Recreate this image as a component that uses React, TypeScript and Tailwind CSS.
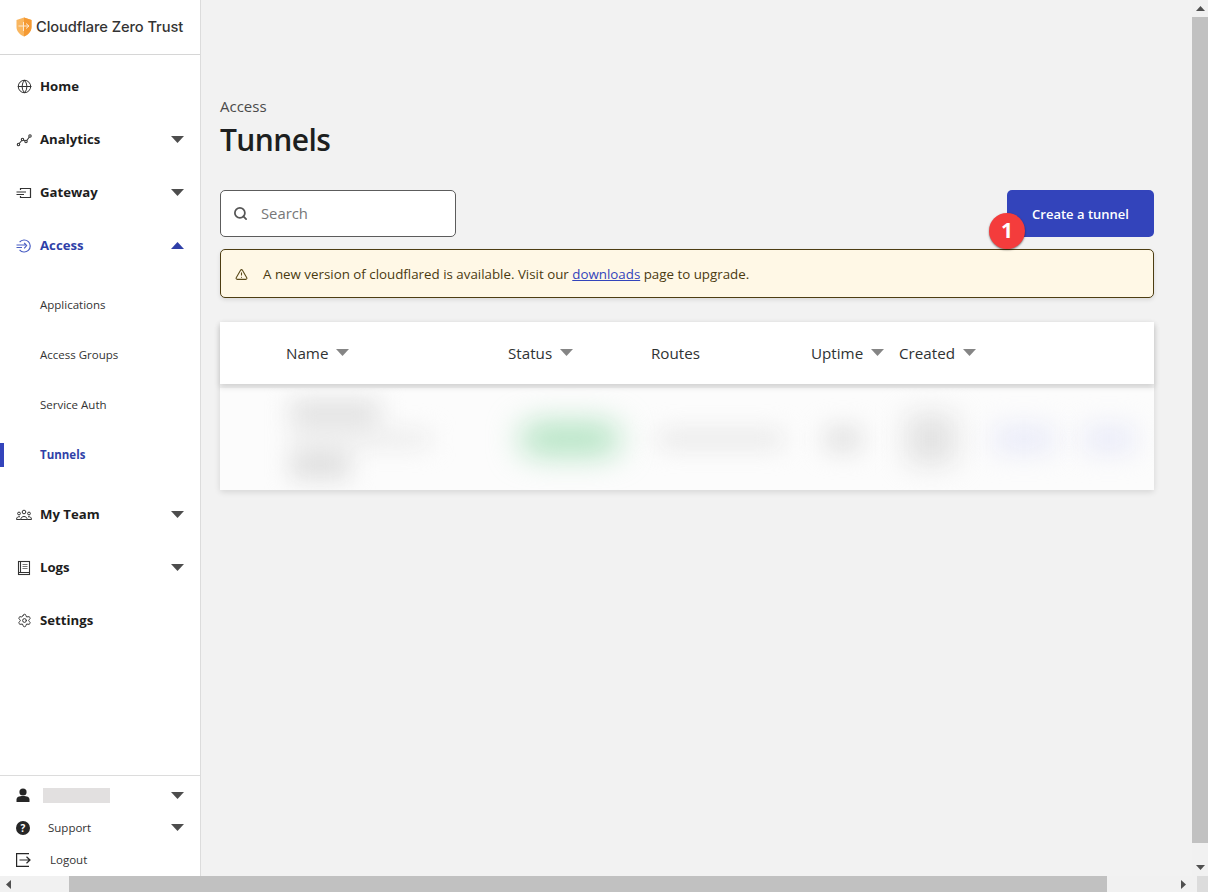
import React from 'react';
import { Globe, Search, Settings, TriangleAlert } from 'lucide-react';

const font = "font-['Open_Sans','Noto_Sans',sans-serif]";

function Caret({ up = false, blue = false }: { up?: boolean; blue?: boolean }) {
  return (
    <svg width="13" height="7" viewBox="0 0 13 7" className="shrink-0">
      <path d={up ? 'M0 7 L6.5 0 L13 7 Z' : 'M0 0 L13 0 L6.5 7 Z'} fill={blue ? '#2f3fa8' : '#4d4d4d'} />
    </svg>
  );
}

function SortCaret() {
  return (
    <svg width="13" height="7" viewBox="0 0 13 7" className="shrink-0">
      <path d="M0 0 L13 0 L6.5 7 Z" fill="#858585" />
    </svg>
  );
}

function Logo() {
  return (
    <svg width="16" height="20" viewBox="0 0 16 20" className="shrink-0">
      <path d="M8 0.5 L15.5 3 V10 C15.5 14.5 12 17.8 8 19.5 C4 17.8 0.5 14.5 0.5 10 V3 Z" fill="#f9b65f" />
      <path d="M8 0.5 L15.5 3 V10 C15.5 14.5 12 17.8 8 19.5 Z" fill="#f59a33" />
      <path d="M2.5 9 H13 M10 6.5 L13 9 L10 11.5 M7.5 5 V14" stroke="#fde9d0" strokeWidth="1" fill="none" />
    </svg>
  );
}

function AnalyticsIcon() {
  return (
    <svg width="16" height="16" viewBox="0 0 16 16" fill="none" stroke="#333" strokeWidth="1.1">
      <circle cx="2.5" cy="12.5" r="1.2" />
      <circle cx="6.5" cy="7.5" r="1.2" />
      <circle cx="10" cy="9.5" r="1.2" />
      <circle cx="14" cy="4" r="1.2" />
      <path d="M3.2 11.5 L5.8 8.5 M7.6 8.1 L8.9 8.9 M10.8 8.5 L13.3 5" />
    </svg>
  );
}

function GatewayIcon() {
  return (
    <svg width="16" height="16" viewBox="0 0 16 16" fill="none" stroke="#333" strokeWidth="1.2">
      <path d="M4.5 5 V3.5 H14.5 V12.5 H4.5 V11" />
      <path d="M0.5 7 H10 M0.5 9.5 H8" />
    </svg>
  );
}

function AccessIcon() {
  return (
    <svg width="16" height="16" viewBox="0 0 16 16" fill="none" stroke="#4a5fc4" strokeWidth="1.2">
      <path d="M3.6 4.2 A6 6 0 1 1 3.6 11.8" />
      <path d="M0.5 7 H10 M0.5 9.5 H6 M8.2 4.8 L10.6 7.6 L8.2 10.4" />
    </svg>
  );
}

function TeamIcon() {
  return (
    <svg width="16" height="12" viewBox="0 0 16 12" fill="none" stroke="#333" strokeWidth="1">
      <circle cx="8" cy="3" r="1.8" />
      <circle cx="3" cy="4.5" r="1.4" />
      <circle cx="13" cy="4.5" r="1.4" />
      <path d="M4.8 10.5 C4.8 6.5 11.2 6.5 11.2 10.5 Z" />
      <path d="M0.5 10.5 C0.5 7.8 2.6 7.4 4 7.8 M15.5 10.5 C15.5 7.8 13.4 7.4 12 7.8 M0.5 10.5 H4.8 M11.2 10.5 H15.5" />
    </svg>
  );
}

function LogsIcon() {
  return (
    <svg width="16" height="16" viewBox="0 0 16 16" fill="none" stroke="#333" strokeWidth="1.1">
      <rect x="2.5" y="1.5" width="11" height="13" />
      <path d="M2.5 12.5 H13.5 M4.5 1.5 V12.5" />
      <path d="M6.5 4.5 H11.5 M6.5 6.5 H11.5 M6.5 8.5 H11.5" stroke="#777" />
    </svg>
  );
}

function UserIcon() {
  return (
    <svg width="14" height="14" viewBox="0 0 14 14" fill="#262626">
      <circle cx="7" cy="4" r="3.6" />
      <path d="M0.5 14 V11.5 C0.5 9 3 8 7 8 C11 8 13.5 9 13.5 11.5 V14 Z" />
    </svg>
  );
}

function LogoutIcon() {
  return (
    <svg width="15" height="14" viewBox="0 0 15 14" fill="none" stroke="#262626" strokeWidth="1.2">
      <path d="M13 0.6 H0.6 V13.4 H13" />
      <path d="M3.5 7 H14 M10.5 3.8 L14 7 L10.5 10.2" />
    </svg>
  );
}

function NavItem({
  icon,
  label,
  caret,
  active,
}: {
  icon: React.ReactNode;
  label: string;
  caret?: 'up' | 'down';
  active?: boolean;
}) {
  return (
    <div className="flex h-[53px] items-center pl-4 pr-4">
      <span className="flex w-6 shrink-0 items-center justify-start">{icon}</span>
      <span className={`flex-1 text-[13.2px] font-bold ${active ? 'text-[#2f3fa8]' : 'text-[#1d1d1d]'}`}>{label}</span>
      {caret && <Caret up={caret === 'up'} blue={active} />}
    </div>
  );
}

function SubItem({ label, active }: { label: string; active?: boolean }) {
  return (
    <div className="flex h-[50px] items-center">
      <span className={`h-6 w-[4px] ${active ? 'bg-[#3344bb]' : ''}`} />
      <span className={`pl-9 text-[11.5px] ${active ? 'font-bold text-[#2f3fa8]' : 'text-[#333]'}`}>{label}</span>
    </div>
  );
}

function Sidebar() {
  return (
    <aside className="flex w-[201px] shrink-0 flex-col border-r border-[#dcdcdc] bg-white">
      <div className="flex h-[55px] shrink-0 items-center gap-1 border-b border-[#d6d6d6] pl-4">
        <Logo />
        <span className="font-['Inter',sans-serif] text-[14.7px] font-medium tracking-[-0.1px] text-[#333]">Cloudflare Zero Trust</span>
      </div>
      <nav className="flex flex-1 flex-col pt-[5px]">
        <NavItem icon={<Globe size={15} color="#333" strokeWidth={1.6} className="ml-[1px]" />} label="Home" />
        <NavItem icon={<AnalyticsIcon />} label="Analytics" caret="down" />
        <NavItem icon={<GatewayIcon />} label="Gateway" caret="down" />
        <NavItem icon={<AccessIcon />} label="Access" caret="up" active />
        <div className="flex flex-col pb-[8px] pt-[8px]">
          <SubItem label="Applications" />
          <SubItem label="Access Groups" />
          <SubItem label="Service Auth" />
          <SubItem label="Tunnels" active />
        </div>
        <NavItem icon={<TeamIcon />} label="My Team" caret="down" />
        <NavItem icon={<LogsIcon />} label="Logs" caret="down" />
        <NavItem icon={<Settings size={15} color="#333" strokeWidth={1.6} className="ml-[1px]" />} label="Settings" />
      </nav>
      <div className="flex h-[101px] shrink-0 flex-col border-t border-[#dcdcdc] pl-4 pr-4 pt-[3px]">
        <div className="flex h-[32px] items-center">
          <span className="w-[27px]"><UserIcon /></span>
          <span className="h-[15px] w-[67px] flex-none bg-[#e2e0e0]" />
          <span className="flex-1" />
          <Caret />
        </div>
        <div className="flex h-[33px] items-center">
          <span className="flex w-[32px] items-center">
            <span className="flex h-[14px] w-[14px] items-center justify-center rounded-full bg-[#262626] text-[10px] font-bold leading-none text-white">?</span>
          </span>
          <span className="flex-1 text-[11.5px] text-[#333]">Support</span>
          <Caret />
        </div>
        <div className="flex h-[31px] items-center">
          <span className="w-[34px]"><LogoutIcon /></span>
          <span className="text-[11.5px] text-[#333]">Logout</span>
        </div>
      </div>
    </aside>
  );
}

function Th({ label, sort, className }: { label: string; sort?: boolean; className: string }) {
  return (
    <div className={`flex items-center gap-[8px] text-[15.2px] font-medium text-[#2f3233] ${className}`}>
      <span>{label}</span>
      {sort && <SortCaret />}
    </div>
  );
}

function BlurredRow() {
  return (
    <div className="mt-[4px] flex h-[102px] items-center overflow-hidden bg-[#fcfcfc]">
      <div className="ml-[70px] flex w-[150px] flex-col gap-[8px] blur-[12px]">
        <span className="h-[24px] w-[90px] bg-[#e0e0e0]" />
        <span className="h-[14px] w-[140px] bg-[#e8e8e8]" />
        <span className="h-[24px] w-[60px] bg-[#dcdcdc]" />
      </div>
      <span className="ml-[80px] h-[30px] w-[100px] rounded-full bg-[#a8e0ba] blur-[16px]" />
      <span className="ml-[38px] h-[16px] w-[125px] bg-[#e6e6e6] blur-[12px]" />
      <span className="ml-[42px] h-[24px] w-[36px] bg-[#e0e0e0] blur-[12px]" />
      <span className="ml-[45px] h-[50px] w-[50px] bg-[#e2e2e2] blur-[14px]" />
      <span className="ml-[38px] h-[24px] w-[60px] bg-[#e6e8f8] blur-[14px]" />
      <span className="ml-[30px] h-[24px] w-[50px] bg-[#e6e8f8] blur-[14px]" />
    </div>
  );
}

export default function App() {
  return (
    <div className={`flex h-[892px] w-[1208px] flex-col overflow-hidden bg-[#f2f2f2] ${font}`}>
      <div className="flex h-[876px]">
        <Sidebar />
        <main className="flex min-w-0 flex-1 flex-col pl-[19px] pr-[38px] pt-[97px]">
          <div className="text-[15px] leading-[18px] text-[#4a4a4a]">Access</div>
          <h1 className="mt-[5px] text-[30px] font-semibold leading-[40px] tracking-[-0.6px] text-[#1d1f20]">Tunnels</h1>
          <div className="mt-[30px] flex items-center justify-between">
            <div className="flex h-[47px] w-[236px] items-center gap-[13px] rounded-[5px] border border-[#5c5c5c] bg-white pl-[12px]">
              <Search size={15} color="#555" strokeWidth={2.8} />
              <span className="text-[14.8px] text-[#777]">Search</span>
            </div>
            <div className="relative flex h-[47px] w-[147px] items-center justify-center rounded-[5px] bg-[#3344bb] pt-[2px] text-[13px] font-semibold text-white">
              Create a tunnel
              <span className="absolute left-[-18px] top-[23px] flex h-[36px] w-[36px] items-center justify-center rounded-full bg-[#f43c3c] text-[21px] font-bold text-white shadow-[0_1px_2px_rgba(0,0,0,0.5)]">1</span>
            </div>
          </div>
          <div className="mt-[12px] flex h-[49px] items-center rounded-[5px] border border-[#4d3d12] bg-[#fff8e6] pl-[14px] pt-[2px] text-[13.33px] text-[#4a3a10] shadow-[0_2px_4px_rgba(0,0,0,0.1)]">
            <TriangleAlert size={13} color="#5a4a1a" />
            <span className="ml-[15px]">
              A new version of cloudflared is available. Visit our{' '}
              <span className="text-[#3344bb] underline">downloads</span> page to upgrade.
            </span>
          </div>
          <div className="mt-[24px] rounded-[2px] shadow-[0_2px_6px_rgba(0,0,0,0.12)]">
            <div className="relative flex h-[62px] items-center bg-white shadow-[0_3px_6px_rgba(0,0,0,0.14)]">
              <Th label="Name" sort className="ml-[66px] w-[222px]" />
              <Th label="Status" sort className="w-[143px]" />
              <Th label="Routes" className="w-[160px]" />
              <Th label="Uptime" sort className="w-[88px]" />
              <Th label="Created" sort className="" />
            </div>
            <BlurredRow />
          </div>
        </main>
        <div className="flex w-[16px] shrink-0 flex-col items-center bg-[#f1f1f1]">
          <svg width="9" height="5" viewBox="0 0 9 5" className="mt-[6px] shrink-0">
            <path d="M0 5 L4.5 0 L9 5 Z" fill="#505050" />
          </svg>
          <div className="mt-[6px] h-[826px] w-[16px] shrink-0 bg-[#c1c1c1]" />
          <span className="flex-1" />
          <svg width="9" height="5" viewBox="0 0 9 5" className="mb-[6px] shrink-0">
            <path d="M0 0 L9 0 L4.5 5 Z" fill="#505050" />
          </svg>
        </div>
      </div>
      <div className="flex h-[16px] items-center bg-[#f1f1f1]">
        <svg width="5" height="9" viewBox="0 0 5 9" className="ml-[6px] shrink-0">
          <path d="M5 0 L0 4.5 L5 9 Z" fill="#505050" />
        </svg>
        <div className="ml-[58px] h-[16px] w-[1038px] shrink-0 bg-[#c1c1c1]" />
        <svg width="5" height="9" viewBox="0 0 5 9" className="ml-[74px] shrink-0">
          <path d="M0 0 L5 4.5 L0 9 Z" fill="#505050" />
        </svg>
        <span className="ml-[11px] h-[16px] w-[16px] bg-[#dcdcdc]" />
      </div>
    </div>
  );
}
